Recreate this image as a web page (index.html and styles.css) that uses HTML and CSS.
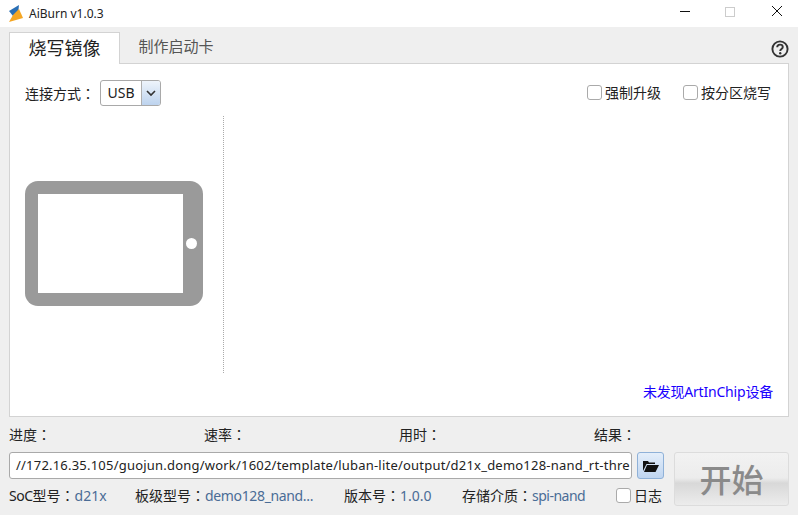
FILE: index.html
```html
<!DOCTYPE html>
<html lang="zh-CN">
<head>
<meta charset="utf-8">
<title>AiBurn v1.0.3</title>
<link rel="stylesheet" href="styles.css">
</head>
<body>
<div class="window">
  <header class="titlebar">
    <svg class="logo" width="18" height="20" viewBox="0 0 18 20">
      <polygon points="1,7 11,1 10,10 5,12" fill="#2a6fb5"/>
      <polygon points="11,5 15,14 1,18 5,11" fill="#f5a623"/>
    </svg>
    <span class="app-title">AiBurn v1.0.3</span>
    <div class="win-controls">
      <svg width="12" height="12" viewBox="0 0 12 12"><path d="M1 6.500h10" stroke="#111" stroke-width="1"/></svg>
      <svg width="12" height="12" viewBox="0 0 12 12"><rect x=".5" y="2.500" width="9" height="9" fill="none" stroke="#ccc"/></svg>
      <svg width="12" height="12" viewBox="0 0 12 12"><path d="M1 1l10 10M11 1L1 11" stroke="#111" stroke-width="1"/></svg>
    </div>
  </header>

  <div class="content">
    <div class="tabs">
      <div class="tab active">烧写镜像</div>
      <div class="tab">制作启动卡</div>
      <svg class="help" width="18" height="18" viewBox="0 0 18 18">
        <circle cx="9" cy="9" r="7.600" fill="none" stroke="#333" stroke-width="1.900"/>
        <path d="M6.200 7.200C6.200 5.600 7.400 4.600 9 4.600c1.600 0 2.800 1 2.800 2.400 0 2-2.600 2-2.600 4" fill="none" stroke="#333" stroke-width="1.900"/>
        <circle cx="9.200" cy="13.200" r="1.200" fill="#333"/>
      </svg>
    </div>

    <section class="panel">
      <div class="options">
        <label class="field-label">连接方式<span lang="zh-TW">：</span></label>
        <div class="combo">
          <span class="combo-value">USB</span>
          <span class="combo-arrow">
            <svg width="10" height="7" viewBox="0 0 10 7"><path d="M1 1l4 4 4-4" fill="none" stroke="#333" stroke-width="1.600"/></svg>
          </span>
        </div>
        <div class="checks">
          <span class="check"><i class="box"></i>强制升级</span>
          <span class="check"><i class="box"></i>按分区烧写</span>
        </div>
      </div>

      <div class="stage">
        <div class="devices">
          <div class="tablet">
            <div class="screen"></div>
            <div class="home"></div>
          </div>
        </div>
        <div class="divider"></div>
      </div>

      <div class="status">未发现ArtInChip设备</div>
    </section>

    <div class="bottom">
      <div class="bottom-left">
        <div class="metrics">
          <span>进度<span lang="zh-TW">：</span></span><span>速率<span lang="zh-TW">：</span></span><span>用时<span lang="zh-TW">：</span></span><span>结果<span lang="zh-TW">：</span></span>
        </div>
        <div class="path-row">
          <div class="path-input">//172.16.35.105/guojun.dong/work/1602/template/luban-lite/output/d21x_demo128-nand_rt-thre</div>
          <button class="folder" type="button">
            <svg width="16" height="12" viewBox="0 0 16 12"><path d="M0 11V1h5l1 1.500h6V4H3.500L0 11zM1 12l3-7h12l-3.500 7H1z" fill="#111"/></svg>
          </button>
        </div>
        <div class="info">
          <span class="info-a"><span class="narrow">SoC</span>型号<span lang="zh-TW">：</span><b>d21x</b></span>
          <span class="info-b">板级型号<span lang="zh-TW">：</span><b class="tight">demo128_nand...</b></span>
          <span class="info-c">版本号<span lang="zh-TW">：</span><b>1.0.0</b></span>
          <span class="info-d">存储介质<span lang="zh-TW">：</span><b class="narrow">spi-nand</b></span>
          <span class="check log"><i class="box"></i>日志</span>
        </div>
      </div>
      <button class="start" type="button">开始</button>
    </div>
  </div>
</div>
</body>
</html>
```
FILE: styles.css
```css
* { box-sizing: border-box; }
html, body { margin: 0; padding: 0; }
body {
  width: 798px;
  height: 515px;
  overflow: hidden;
  background: #efefef;
  color: #222;
  font-family: "Noto Sans", "Noto Sans CJK TC", sans-serif;
  font-size: 14px;
}
.window { display: flex; flex-direction: column; height: 515px; }

.titlebar {
  height: 27px;
  background: #fff;
  display: flex;
  align-items: center;
  padding-left: 8px;
  flex: none;
}
.logo { margin-right: 3px; }
.app-title { font-size: 12px; color: #222; }
.win-controls { margin-left: auto; display: flex; gap: 34px; margin-right: 15px; margin-top: -5px; }

.content { flex: 1; padding: 5px 9px 0; display: flex; flex-direction: column; }

.tabs { display: flex; height: 31px; align-items: flex-end; position: relative; }
.tab {
  width: 112px;
  height: 31px;
  text-align: center;
  line-height: 29px;
  font-size: 15px;
  color: #555;
}
.tab.active {
  width: 111px;
  height: 32px;
  background: #fff;
  border: 1px solid #d3d3d3;
  border-bottom: 0;
  font-size: 18px;
  line-height: 31px;
  color: #222;
  position: relative;
  z-index: 1;
  margin-bottom: -1px;
}
.help { position: absolute; right: 0; top: 8px; }

.panel {
  height: 354px;
  background: #fff;
  border: 1px solid #d3d3d3;
  display: flex;
  flex-direction: column;
  position: relative;
}
.options { display: flex; align-items: center; height: 50px; padding: 8px 17px 0 15px; flex: none; }
.field-label { margin-right: 5px; }
.combo {
  width: 61px;
  height: 26px;
  border: 1px solid #a9a9a9;
  border-radius: 3px;
  display: flex;
  background: #fff;
  overflow: hidden;
}
.combo-value { width: 40px; text-align: center; line-height: 24px; }
.combo-arrow {
  flex: 1;
  border-left: 1px solid #b0b0b0;
  background: linear-gradient(#eef4fb, #bdd3ee);
  display: flex;
  align-items: center;
  justify-content: center;
}
.checks { margin-left: auto; display: flex; gap: 22px; margin-top: -2px; }
.check { display: inline-flex; align-items: center; gap: 3px; }
.box {
  display: block;
  width: 15px;
  height: 15px;
  background: #fff;
  border: 1px solid #aaa;
  border-radius: 3px;
}

.stage { flex: 1; display: flex; min-height: 0; }
.devices { width: 213px; display: flex; padding: 67px 0 0 15px; }
.tablet {
  width: 178px;
  height: 125px;
  background: #9a9a9a;
  border-radius: 13px;
  display: flex;
  padding: 13px 9px 13px 13px;
  position: relative;
}
.screen { width: 145px; height: 99px; background: #fff; }
.home { position: absolute; width: 11px; height: 11px; border-radius: 50%; background: #fff; left: 161px; top: 57px; }
.divider { height: 257px; margin-top: 2px; border-left: 1px dotted #aaa; }

.status { color: #1a00ff; text-align: right; padding: 0 15px 0 0; height: 33px; line-height: 18px; letter-spacing: -.2px; flex: none; margin-top: auto; }

.bottom { display: flex; flex: 1; padding-top: 8px; }
.bottom-left { width: 655px; display: flex; flex-direction: column; }
.metrics { display: grid; grid-template-columns: repeat(4, 195px); height: 20px; line-height: 20px; }
.path-row { display: flex; gap: 5px; margin-top: 7px; height: 27px; }
.path-input {
  width: 623px;
  background: #fff;
  border: 1px solid #a9a9a9;
  border-radius: 3px;
  padding: 0 0 0 6px;
  line-height: 25px;
  font-size: 13px;
  letter-spacing: .21px;
  white-space: nowrap;
}
.folder {
  width: 27px;
  padding: 0;
  border: 1px solid #8fb1d8;
  border-radius: 3px;
  background: linear-gradient(#e4eefa, #bfd5f0);
  display: flex;
  align-items: center;
  justify-content: center;
}
.info { display: flex; align-items: center; margin-top: 6px; height: 20px; white-space: nowrap; }
.info b { font-weight: 400; color: #4a6c96; }
.tight { letter-spacing: -.35px; }
.narrow { letter-spacing: -.5px; }
.info-a { width: 126px; }
.info-b { width: 209px; }
.info-c { width: 118px; }
.info-d { width: 154px; }
.log { gap: 3px; }
.start {
  width: 115px;
  height: 54px;
  margin: 27px 0 0 10px;
  padding: 0 0 2px;
  border: 1px solid #dcdcdc;
  border-radius: 3px;
  background: linear-gradient(#f2f2f2 0, #ececec 48%, #d8d8d8 58%, #ececec 100%);
  color: #8a8a8a;
  font-family: "Noto Sans CJK SC", sans-serif;
  font-size: 32px;
  font-weight: 500;
}
```
